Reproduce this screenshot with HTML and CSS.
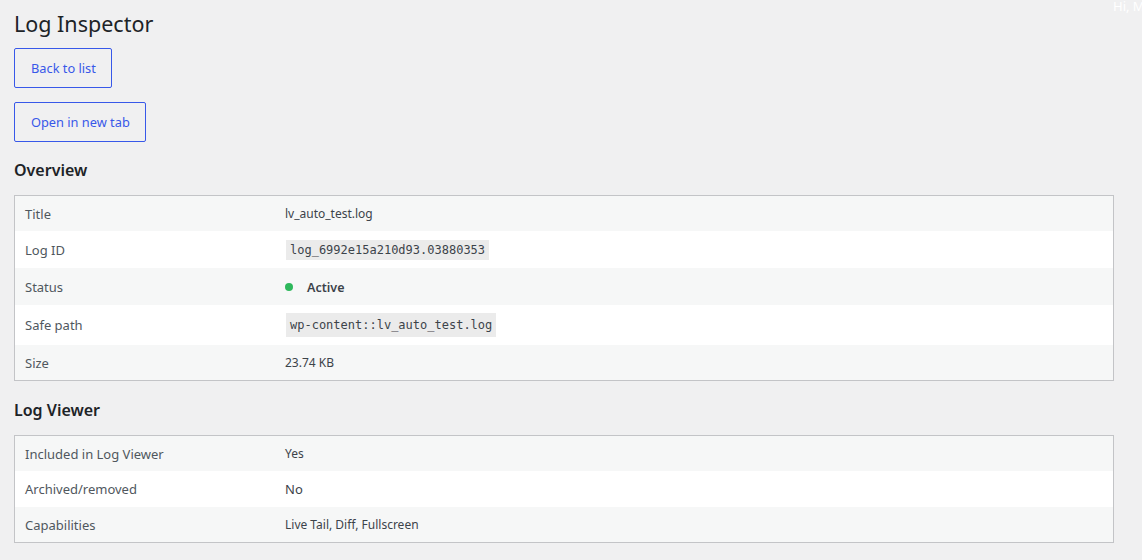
FILE: index.html
```html
<!DOCTYPE html>
<html lang="en">
<head>
<meta charset="utf-8">
<title>Log Inspector</title>
<link rel="stylesheet" href="styles.css">
</head>
<body>
<div class="greeting">Hi, M</div>
<div class="wrap">
  <h1 class="page-title">Log Inspector</h1>
  <div class="actions">
    <a class="button" href="#">Back to list</a>
    <a class="button" href="#">Open in new tab</a>
  </div>

  <h2 class="section-title">Overview</h2>
  <table class="info-table">
    <tbody>
      <tr class="alt r35"><th>Title</th><td class="small">lv_auto_test.log</td></tr>
      <tr class="r37"><th>Log ID</th><td><code class="code">log_6992e15a210d93.03880353</code></td></tr>
      <tr class="alt r37"><th>Status</th><td><span class="status"><span class="dot"></span>Active</span></td></tr>
      <tr class="r40"><th>Safe path</th><td><code class="code code-lg">wp-content::lv_auto_test.log</code></td></tr>
      <tr class="alt r35"><th>Size</th><td class="small">23.74 KB</td></tr>
    </tbody>
  </table>

  <h2 class="section-title">Log Viewer</h2>
  <table class="info-table">
    <tbody>
      <tr class="alt r35"><th>Included in Log Viewer</th><td class="small">Yes</td></tr>
      <tr class="r36"><th>Archived/removed</th><td>No</td></tr>
      <tr class="alt r35"><th>Capabilities</th><td class="small">Live Tail, Diff, Fullscreen</td></tr>
    </tbody>
  </table>
</div>
</body>
</html>
```

FILE: styles.css
```css
* { box-sizing: border-box; }
html, body { margin: 0; padding: 0; }
body {
  background: #f0f0f1;
  font-family: "Noto Sans", "Open Sans", sans-serif;
  font-size: 13px;
  color: #3c434a;
  width: 1142px;
  height: 560px;
  overflow: hidden;
  position: relative;
}
.greeting {
  position: absolute;
  top: 0;
  left: 1113px;
  color: #ffffff;
  font-size: 13px;
  line-height: 12px;
  white-space: nowrap;
}
.wrap {
  padding: 8px 28px 0 14px;
}
.page-title {
  margin: 0;
  font-size: 21.5px;
  font-weight: 400;
  line-height: 32px;
  color: #1d2327;
}
.actions {
  display: flex;
  flex-direction: column;
  align-items: flex-start;
  gap: 14px;
  margin-top: 8px;
}
.button {
  display: inline-flex;
  align-items: center;
  height: 40px;
  padding: 0 15px 0 16px;
  border: 1px solid #3858e9;
  border-radius: 2px;
  color: #3858e9;
  text-decoration: none;
  font-size: 12.8px;
}
.section-title {
  margin: 0;
  font-size: 16px;
  font-weight: 600;
  color: #1d2327;
  line-height: 24px;
  padding: 16px 0 0;
}
.section-title + .info-table { margin-top: 13px; }
.info-table {
  width: 100%;
  border: 1px solid #c3c4c7;
  border-collapse: separate;
  border-spacing: 0;
  background: #fff;
  margin-bottom: 1px;
}
.info-table tr.alt { background: #f6f7f7; }
.info-table tr.r35 { height: 35px; }
.info-table tr.r36 { height: 36px; }
.info-table tr.r37 { height: 37px; }
.info-table tr.r40 { height: 40px; }
.info-table th {
  width: 260px;
  text-align: left;
  font-weight: 400;
  color: #50575e;
  padding: 0 10px;
  vertical-align: middle;
}
.info-table td {
  padding: 0 10px;
  vertical-align: middle;
  color: #3c434a;
}
.info-table td.small { font-size: 12px; }
.code {
  display: inline-block;
  font-family: "DejaVu Sans Mono", "Liberation Mono", monospace;
  font-size: 12px;
  line-height: 20px;
  background: #ebebeb;
  padding: 0 4px;
  margin-left: 1px;
  color: #3c434a;
}
.code-lg { line-height: 24px; padding: 0 4px; }
.status {
  display: inline-flex;
  align-items: center;
  font-weight: 600;
  font-size: 12.5px;
  padding-top: 1px;
}
.dot {
  width: 8px;
  height: 8px;
  border-radius: 50%;
  background: #2eb85c;
  margin-right: 14px;
}
```
